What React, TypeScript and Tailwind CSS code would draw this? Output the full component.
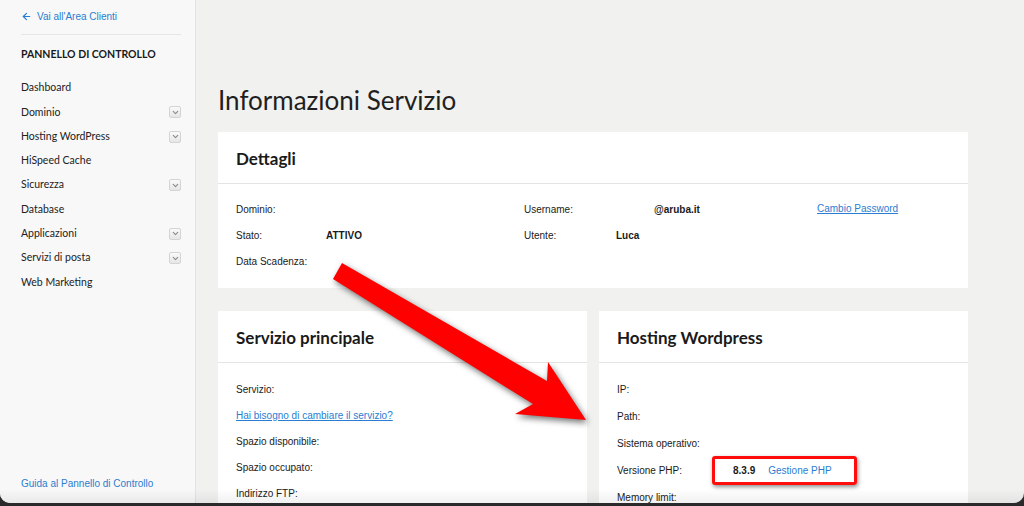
import { ArrowLeft, ChevronDown } from "lucide-react";

const menu = [
  { label: "Dashboard", sub: false },
  { label: "Dominio", sub: true },
  { label: "Hosting WordPress", sub: true },
  { label: "HiSpeed Cache", sub: false },
  { label: "Sicurezza", sub: true },
  { label: "Database", sub: false },
  { label: "Applicazioni", sub: true },
  { label: "Servizi di posta", sub: true },
  { label: "Web Marketing", sub: false },
];

function Toggle() {
  return (
    <span className="flex h-[12px] w-[12px] items-center justify-center rounded-[2px] border border-[#d4d4d4] bg-gradient-to-b from-[#fafafa] to-[#e6e6e6]">
      <ChevronDown size={9} strokeWidth={3} className="text-[#8a8a8a]" />
    </span>
  );
}

function Sidebar() {
  return (
    <aside className="flex w-[196px] shrink-0 flex-col border-r border-[#e3e3e3] bg-[#f8f8f8] pl-[21px] pr-[14px] font-['Lato',sans-serif]">
      <a className="mt-[9px] flex h-[14px] items-center gap-[5px] font-['Liberation_Sans',Arial,sans-serif] text-[10px] text-[#2a7dd1]">
        <ArrowLeft size={11} strokeWidth={2.5} />
        Vai all'Area Clienti
      </a>
      <div className="mt-[11px] border-t border-[#e6e6e6]" />
      <h2 className="mt-[12px] text-[10.5px] font-bold leading-[14px] text-[#1a1a1a]">
        PANNELLO DI CONTROLLO
      </h2>
      <ul className="mt-[15px] flex flex-col">
        {menu.map((m) => (
          <li
            key={m.label}
            className="flex h-[24.3px] items-center justify-between text-[10.5px] text-[#222]"
          >
            <span>{m.label}</span>
            {m.sub && <Toggle />}
          </li>
        ))}
      </ul>
      <a className="mt-auto mb-[12px] font-['Liberation_Sans',Arial,sans-serif] text-[10px] text-[#2a7dd1]">
        Guida al Pannello di Controllo
      </a>
    </aside>
  );
}

function CardHeader({ title }: { title: string }) {
  return (
    <div className="flex h-[52px] items-center border-b border-[#e4e4e4] px-[18px] pt-[2px] font-['Lato',sans-serif] text-[17px] font-bold text-[#1a1a1a]">
      {title}
    </div>
  );
}

function Label({ children, w }: { children: React.ReactNode; w: string }) {
  return <span className={`${w} shrink-0`}>{children}</span>;
}

export default function App() {
  return (
    <div className="h-[506px] w-[1024px] overflow-hidden bg-[#2a2a2a]">
      <div className="relative flex h-[503px] overflow-hidden rounded-b-[10px] bg-[#f1f1f0]">
        <Sidebar />
        <main className="flex flex-1 flex-col pl-[22px] pr-[56px] pt-[84px] font-['Liberation_Sans',Arial,sans-serif] text-[10px] text-[#1a1a1a]">
          <h1 className="mb-[16px] font-['Lato',sans-serif] text-[26px] leading-[32px] text-[#1f1f1f]">
            Informazioni Servizio
          </h1>

          <section className="bg-white">
            <CardHeader title="Dettagli" />
            <div className="flex flex-col px-[18px] pt-[12px] pb-[14px]">
              <div className="flex h-[26px] items-center">
                <Label w="w-[90px]">Dominio:</Label>
                <span className="w-[198px]" />
                <Label w="w-[92px]">Username:</Label>
                <span className="w-[201px] pl-[38px] font-bold">@aruba.it</span>
                <a className="-mt-[1px] text-[#2a7dd1] underline">Cambio Password</a>
              </div>
              <div className="flex h-[26px] items-center">
                <Label w="w-[90px]">Stato:</Label>
                <span className="w-[198px] font-bold">ATTIVO</span>
                <Label w="w-[92px]">Utente:</Label>
                <span className="font-bold">Luca</span>
              </div>
              <div className="flex h-[26px] items-center">
                <Label w="w-[90px]">Data Scadenza:</Label>
              </div>
            </div>
          </section>

          <div className="mt-[23px] flex flex-1 gap-[12px]">
            <section className="flex-1 bg-white">
              <CardHeader title="Servizio principale" />
              <div className="flex flex-col px-[18px] pt-[13px]">
                <div className="flex h-[26px] items-center">Servizio:</div>
                <div className="flex h-[26px] items-center">
                  <a className="text-[#2a7dd1] underline">Hai bisogno di cambiare il servizio?</a>
                </div>
                <div className="flex h-[26px] items-center">Spazio disponibile:</div>
                <div className="flex h-[26.5px] items-center">Spazio occupato:</div>
                <div className="flex h-[26.5px] items-center">Indirizzo FTP:</div>
              </div>
            </section>
            <section className="flex-1 bg-white">
              <CardHeader title="Hosting Wordpress" />
              <div className="flex flex-col px-[18px] pt-[13px]">
                <div className="flex h-[27px] items-center">IP:</div>
                <div className="flex h-[27px] items-center">Path:</div>
                <div className="flex h-[27px] items-center">Sistema operativo:</div>
                <div className="flex h-[27px] items-center">
                  <Label w="w-[95px]">Versione PHP:</Label>
                  <span className="-my-[1px] flex h-[29px] items-center gap-[13px] rounded-[3px] border-[3px] border-[#ff0d0d] pl-[18px] pr-[22px] shadow-[1px_2px_4px_rgba(0,0,0,0.45)]">
                    <span className="font-bold">8.3.9</span>
                    <a className="text-[#2a7dd1]">Gestione PHP</a>
                  </span>
                </div>
                <div className="flex h-[27px] items-center">Memory limit:</div>
              </div>
            </section>
          </div>
        </main>

        <svg
          className="pointer-events-none absolute left-0 top-0 drop-shadow-[2px_3px_3px_rgba(0,0,0,0.55)]"
          width="1024"
          height="503"
          viewBox="0 0 1024 503"
        >
          <polygon
            points="342,263 547,381 548,362 586,420 515,414 533,404 333,279"
            fill="#ff0000"
          />
        </svg>
        <div className="pointer-events-none absolute inset-x-0 bottom-0 h-[14px] bg-gradient-to-b from-transparent to-[rgba(0,0,0,0.06)]" />
      </div>
    </div>
  );
}
